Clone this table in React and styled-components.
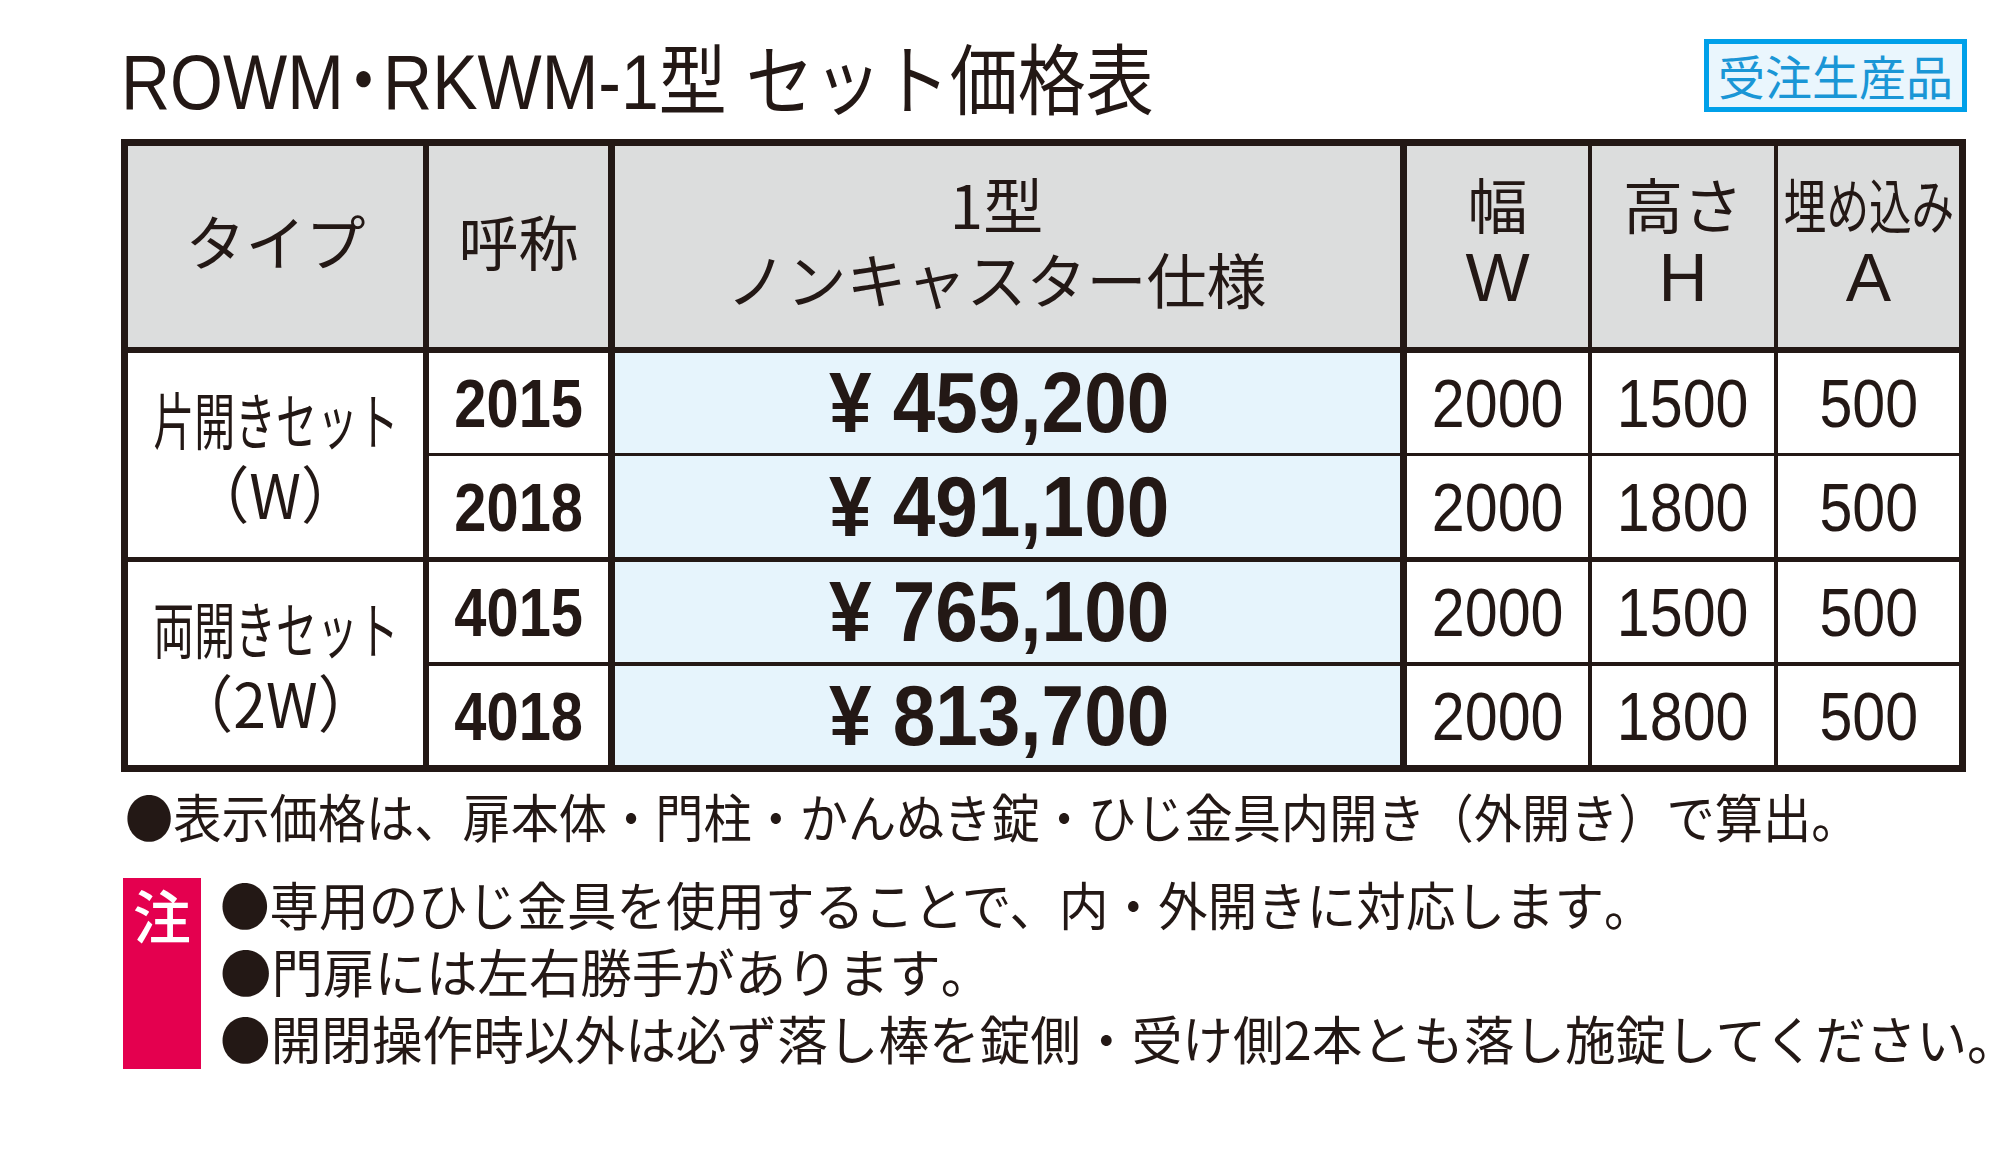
import styled, { createGlobalStyle } from "styled-components";

const INK = "#231815";

const GlobalStyle = createGlobalStyle`
  html, body {
    margin: 0;
    padding: 0;
    background: #ffffff;
  }
  body {
    font-family: "Noto Sans CJK JP", "Noto Sans", sans-serif;
    color: ${INK};
  }
`;

const Page = styled.div`
  width: 1846px;
  padding: 39px 0 40px 121px;
`;

const TopBar = styled.div`
  display: flex;
  justify-content: space-between;
  align-items: flex-start;
  height: 73px;
`;

const Title = styled.h1`
  margin: 0;
  font-family: "Liberation Sans", "Noto Sans CJK JP", sans-serif;
  font-size: 77px;
  font-weight: 400;
  line-height: 73px;
  white-space: nowrap;
  transform: scaleX(0.883);
  transform-origin: left center;
`;

// half-width punctuation (・ in the title, 。 at the end of a note)
const Half = styled.span`
  font-family: "Noto Sans CJK JP", sans-serif;
  font-feature-settings: "halt";
  margin: 0 ${(p) => p.$pad || 0}px;
`;

const Badge = styled.div`
  box-sizing: border-box;
  width: 263px;
  height: 73px;
  border: 5px solid #00a0e9;
  background: #eaf6fd;
  color: #1a96d6;
  font-size: 47px;
  line-height: 61px;
  text-align: center;
  white-space: nowrap;
`;

const Grid = styled.div`
  margin-top: 27px;
  display: grid;
  grid-template-columns: 295px 185px 792px 188px 186px 185px;
  grid-template-rows: 201px 106px 104px 105px 103px;
  border: 7px solid ${INK};
  width: max-content;
`;

const Cell = styled.div`
  box-sizing: border-box;
  border-left: ${(p) => p.$l || 0}px solid ${INK};
  border-top: ${(p) => p.$t || 0}px solid ${INK};
  grid-row: span ${(p) => p.$span || 1};
  display: flex;
  flex-direction: column;
  align-items: center;
  justify-content: center;
  text-align: center;
  white-space: nowrap;
  background: #ffffff;
`;

const HeadCell = styled(Cell)`
  background: #dcdddd;
  font-size: 60px;
  line-height: 75px;
  padding-bottom: 14px;
  padding-right: ${(p) => p.$shift || 0}px;
`;

const TypeCell = styled(Cell)`
  font-size: 62px;
  line-height: 74px;
`;

const CodeCell = styled(Cell)`
  font-family: "Liberation Sans", sans-serif;
  font-weight: 700;
  font-size: 68px;
`;

const PriceCell = styled(Cell)`
  background: #e6f4fc;
  padding-right: 16px;
  font-family: "Liberation Sans", sans-serif;
  font-weight: 700;
  font-size: 85px;
`;

const SizeCell = styled(Cell)`
  font-family: "Liberation Sans", sans-serif;
  font-size: 68px;
`;

const Letter = styled.span`
  font-family: "Liberation Sans", sans-serif;
  font-size: 68px;
`;

const Squeeze = styled.span`
  display: inline-block;
  white-space: nowrap;
  transform: scaleX(${(p) => p.$x});
  transform-origin: ${(p) => p.$origin || "center"} center;
`;

const NoteLine = styled.div`
  font-size: 52px;
  line-height: 67px;
  white-space: nowrap;
`;

const Lead = styled(NoteLine)`
  margin-top: 10px;
  padding-left: 4px;
`;

const NoteRow = styled.div`
  margin-top: 21px;
  display: flex;
  align-items: flex-start;
  gap: 19px;
`;

const PinkTag = styled.div`
  flex-shrink: 0;
  margin: 8px 0 0 2px;
  width: 78px;
  height: 191px;
  background: #e4004f;
  color: #ffffff;
  font-size: 58px;
  font-weight: 500;
  line-height: 72px;
  text-align: center;
`;

const NoteList = styled.div`
  display: flex;
  flex-direction: column;
`;

const cols = [0, 6, 7, 7, 4, 4];

const groups = [
  {
    type: "片開きセット",
    sub: "（W）",
    top: 6,
    rows: [
      { code: "2015", price: "459,200", w: "2000", h: "1500", a: "500", t: 6 },
      { code: "2018", price: "491,100", w: "2000", h: "1800", a: "500", t: 3 },
    ],
  },
  {
    type: "両開きセット",
    sub: "（2W）",
    top: 5,
    rows: [
      { code: "4015", price: "765,100", w: "2000", h: "1500", a: "500", t: 5 },
      { code: "4018", price: "813,700", w: "2000", h: "1800", a: "500", t: 4 },
    ],
  },
];

const notes = [
  { text: "●専用のひじ金具を使用することで、内・外開きに対応します", x: 0.953 },
  { text: "●門扉には左右勝手があります", x: 0.99 },
  { text: "●開閉操作時以外は必ず落し棒を錠側・受け側2本とも落し施錠してください", x: 0.974 },
];

const App = () => {
  return (
    <Page>
      <GlobalStyle />
      <TopBar>
        <Title>
          ROWM<Half $pad={3}>・</Half>RKWM-1型 セット価格表
        </Title>
        <Badge>受注生産品</Badge>
      </TopBar>

      <Grid>
        <HeadCell $l={cols[0]}>タイプ</HeadCell>
        <HeadCell $l={cols[1]}>呼称</HeadCell>
        <HeadCell $l={cols[2]} $shift={22}>
          <div>1型</div>
          <div>ノンキャスター仕様</div>
        </HeadCell>
        <HeadCell $l={cols[3]}>
          <div>幅</div>
          <Letter>W</Letter>
        </HeadCell>
        <HeadCell $l={cols[4]}>
          <div>高さ</div>
          <Letter>H</Letter>
        </HeadCell>
        <HeadCell $l={cols[5]}>
          <Squeeze $x={0.71}>埋め込み</Squeeze>
          <Letter>A</Letter>
        </HeadCell>

        {groups.map((g) =>
          g.rows.map((r, i) => [
            i === 0 && (
              <TypeCell key={g.type} $l={cols[0]} $t={g.top} $span={2}>
                <Squeeze $x={0.66}>{g.type}</Squeeze>
                <Squeeze $x={0.95}>{g.sub}</Squeeze>
              </TypeCell>
            ),
            <CodeCell key={r.code + "c"} $l={cols[1]} $t={r.t}>
              <Squeeze $x={0.85}>{r.code}</Squeeze>
            </CodeCell>,
            <PriceCell key={r.code + "p"} $l={cols[2]} $t={r.t}>
              <Squeeze $x={0.9}>¥ {r.price}</Squeeze>
            </PriceCell>,
            <SizeCell key={r.code + "w"} $l={cols[3]} $t={r.t}>
              <Squeeze $x={0.87}>{r.w}</Squeeze>
            </SizeCell>,
            <SizeCell key={r.code + "h"} $l={cols[4]} $t={r.t}>
              <Squeeze $x={0.87}>{r.h}</Squeeze>
            </SizeCell>,
            <SizeCell key={r.code + "a"} $l={cols[5]} $t={r.t}>
              <Squeeze $x={0.87}>{r.a}</Squeeze>
            </SizeCell>,
          ])
        )}
      </Grid>

      <Lead>
        <Squeeze $x={0.927} $origin="left">
          ●表示価格は、扉本体・門柱・かんぬき錠・ひじ金具内開き（外開き）で算出<Half>。</Half>
        </Squeeze>
      </Lead>

      <NoteRow>
        <PinkTag>注</PinkTag>
        <NoteList>
          {notes.map((n) => (
            <NoteLine key={n.text}>
              <Squeeze $x={n.x} $origin="left">
                {n.text}
                <Half>。</Half>
              </Squeeze>
            </NoteLine>
          ))}
        </NoteList>
      </NoteRow>
    </Page>
  );
};

export default App;
